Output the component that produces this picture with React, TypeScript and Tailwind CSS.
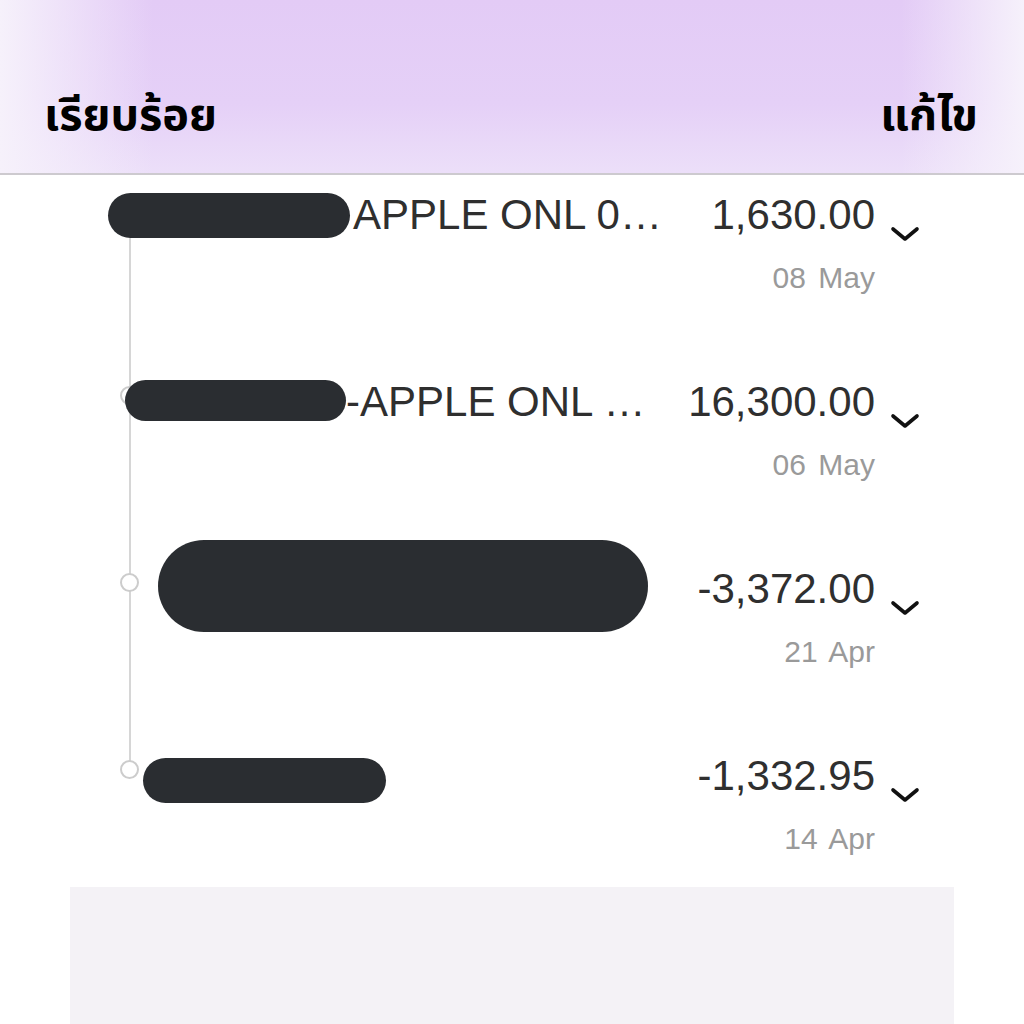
import React from 'react';

type Txn = {
  id: number;
  label: string;
  amount: string;
  date: string;
  pill: string;
  text: string;
  circle: boolean;
  row: string;
};

const TXNS: Txn[] = [
  { id: 1, label: 'APPLE ONL 0…', amount: '1,630.00', date: '08 May', pill: 'ml-[108px] w-[242px] h-[45px]', text: 'ml-[3px]', circle: false, row: 'h-[187px]' },
  { id: 2, label: '-APPLE ONL …', amount: '16,300.00', date: '06 May', pill: 'ml-[125px] w-[221px] h-[41px] -mt-[4px]', text: 'ml-[0px]', circle: true, row: 'h-[187px]' },
  { id: 3, label: '', amount: '-3,372.00', date: '21 Apr', pill: 'ml-[158px] w-[490px] h-[92px] -mt-[6px]', text: '', circle: true, row: 'h-[187px]' },
  { id: 4, label: '', amount: '-1,332.95', date: '14 Apr', pill: 'ml-[143px] w-[243px] h-[45px] mt-[8px]', text: '', circle: true, row: 'h-[151px]' },
];

function Chevron() {
  return (
    <svg width="30" height="16" viewBox="0 0 30 16" fill="none" className="mt-[35px] ml-[15px] shrink-0">
      <path d="M3 3 L15 13 L27 3" stroke="#111" strokeWidth="3.6" strokeLinecap="round" strokeLinejoin="round" />
    </svg>
  );
}

export default function App() {
  return (
    <div className="w-[1024px] h-[1024px] overflow-hidden bg-white" style={{ fontFamily: '"Liberation Sans", Arial, sans-serif' }}>
      {/* Header */}
      <div className="relative h-[175px] border-b-2 border-[#cdcacf] bg-[linear-gradient(180deg,#e3cbf6_0%,#e5d0f7_60%,#ecdff9_100%)]">
        <div className="absolute inset-0 bg-[linear-gradient(90deg,#f6f1fb_0%,rgba(246,241,251,0)_15%,rgba(246,241,251,0)_88%,#f6f1fb_100%)]" />
        <div className="relative flex justify-between items-center h-full pt-[60px] pl-[44px] pr-[46px] text-[45px] font-bold text-black" style={{ fontFamily: '"Noto Sans Thai", "Noto Sans", sans-serif' }}>
          <span>เรียบร้อย</span>
          <span>แก้ไข</span>
        </div>
      </div>

      {/* List */}
      <div className="relative">
        <div className="absolute left-[129px] top-[40px] h-[554px] w-[2px] bg-[#d6d6d6]" />
        {TXNS.map(t => (
          <div key={t.id} className={`relative flex justify-between pt-[16px] pr-[104px] ${t.row}`}>
            {t.circle && (
              <div className="absolute left-[120px] top-[24px] w-[19px] h-[19px] rounded-full border-2 border-[#cccccc] bg-white" />
            )}
            <div className="relative flex items-center h-[48px]">
              <div className={`rounded-full bg-[#2a2d31] shrink-0 ${t.pill}`} />
              {t.label && (
                <span className={`text-[42px] leading-[48px] text-[#2f2f2f] whitespace-nowrap ${t.text}`}>{t.label}</span>
              )}
            </div>
            <div className="flex items-start">
              <div className="flex flex-col items-end">
                <span className="text-[42px] leading-[48px] text-[#2f2f2f]">{t.amount}</span>
                <span className="mt-[21px] text-[30px] leading-[36px] text-[#9a9a9a] [word-spacing:4px]">{t.date}</span>
              </div>
              <Chevron />
            </div>
          </div>
        ))}
        <div className="mx-[70px] h-[140px] bg-[#f4f2f6]" />
      </div>
    </div>
  );
}
